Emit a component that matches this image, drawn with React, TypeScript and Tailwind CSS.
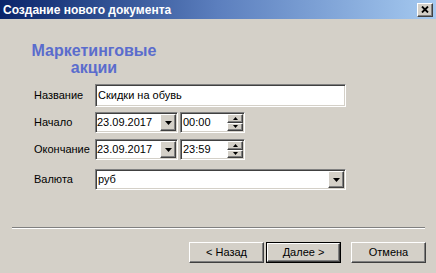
const sunken =
  "bg-white border border-t-[#808080] border-l-[#808080] border-r-white border-b-white shadow-[inset_1px_1px_0_#404040,inset_-1px_-1px_0_#d4d0c8]";
const raised =
  "bg-[#d4d0c8] border border-t-white border-l-white border-r-[#404040] border-b-[#404040] shadow-[inset_-1px_-1px_0_#808080]";

function DropButton() {
  return (
    <div className={`${raised} w-[16px] h-[17px] flex items-center justify-center`}>
      <svg width="7" height="4" viewBox="0 0 7 4">
        <path d="M0 0h7L3.5 4z" fill="#000" />
      </svg>
    </div>
  );
}

function Spin() {
  return (
    <div className="flex flex-col">
      {["M0 3h5L2.5 0z", "M0 0h5L2.5 3z"].map((d) => (
        <div key={d} className={`${raised} w-[16px] h-[8.5px] flex items-center justify-center`}>
          <svg width="5" height="3" viewBox="0 0 5 3">
            <path d={d} fill="#000" />
          </svg>
        </div>
      ))}
    </div>
  );
}

function DateTime({ date, time }: { date: string; time: string }) {
  return (
    <div className="flex gap-[2px]">
      <div className={`${sunken} w-[83px] h-[21px] flex items-center justify-between pl-[1px] pr-[1px]`}>
        <span>{date}</span>
        <DropButton />
      </div>
      <div className={`${sunken} w-[65px] h-[21px] flex items-center justify-between pl-[2px] pr-[1px]`}>
        <span className="self-start mt-[1px]">{time}</span>
        <Spin />
      </div>
    </div>
  );
}

function Row({ label, className, children }: { label: string; className: string; children: React.ReactNode }) {
  return (
    <div className={`flex items-center pl-[34px] ${className}`}>
      <span className="w-[61px]">{label}</span>
      {children}
    </div>
  );
}

function Button({ children, def }: { children: React.ReactNode; def?: boolean }) {
  return (
    <button
      type="button"
      className={`h-[21px] w-[75px] ${def ? "border border-black" : ""}`}
    >
      <div className={`${raised} w-full h-full flex items-center justify-center text-black`}>
        {children}
      </div>
    </button>
  );
}

export default function App() {
  return (
    <div className="w-[436px] h-[273px] bg-[#d4d0c8] flex flex-col font-['Liberation_Sans',Arial,sans-serif] text-[11px] text-black overflow-hidden">
      <div className="h-[19px] bg-gradient-to-r from-[#0a246a] via-[#5c7fbe] to-[#a6caf0] flex items-center justify-between pl-[3px] pr-[3px]">
        <span className="text-white font-bold text-[12px]">Создание нового документа</span>
        <div className={`${raised} w-[16px] h-[14px] flex items-center justify-center`}>
          <svg width="8" height="7" viewBox="0 0 8 7">
            <path d="M1 0.5L7 6.5M7 0.5L1 6.5" stroke="#000" strokeWidth="1.8" />
          </svg>
        </div>
      </div>

      <div className="pl-[12px] pt-[23px]">
        <div className="w-[164px] text-center text-[#5a6ccd] font-bold text-[16px] leading-[17px]">
          Маркетинговые
          <br />
          акции
        </div>
      </div>

      <Row label="Название" className="mt-[8px]">
        <div className={`${sunken} w-[251px] h-[23px] flex items-center pl-[2px]`}>Скидки на обувь</div>
      </Row>
      <Row label="Начало" className="mt-[5px]">
        <DateTime date="23.09.2017" time="00:00" />
      </Row>
      <Row label="Окончание" className="mt-[6px]">
        <DateTime date="23.09.2017" time="23:59" />
      </Row>
      <Row label="Валюта" className="mt-[9px]">
        <div className={`${sunken} w-[251px] h-[21px] flex items-center justify-between pl-[2px] pr-[1px]`}>
          <span>руб</span>
          <DropButton />
        </div>
      </Row>

      <div className="mt-[37px] mx-[12px] w-[413px] border-t border-t-[#808080] border-b border-b-white" />

      <div className="mt-[13px] flex justify-end pr-[10px]">
        <Button>&lt; Назад</Button>
        <div className="ml-[2px]">
          <Button def>Далее &gt;</Button>
        </div>
        <div className="ml-[10px]">
          <Button>Отмена</Button>
        </div>
      </div>
    </div>
  );
}
